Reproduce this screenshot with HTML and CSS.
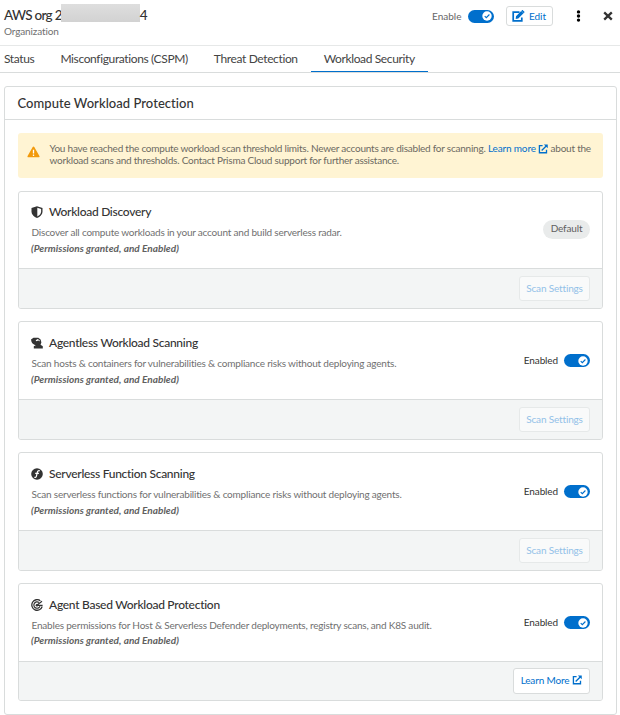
FILE: index.html
```html
<!DOCTYPE html>
<html lang="en">
<head>
<meta charset="utf-8">
<title>Workload Security</title>
<link rel="stylesheet" href="styles.css">
</head>
<body>
<svg class="defs" aria-hidden="true">
  <symbol id="external" viewBox="0 0 12 12"><path d="M5.500 2H1.700v8.500h8.500V6.800M4.400 7.800 10.500 1.700" fill="none" stroke="currentColor" stroke-width="1.600"/><path d="M7 .5h4.700v4.700z" fill="currentColor"/></symbol>
  <symbol id="check" viewBox="0 0 10 10"><circle cx="5" cy="5" r="4.700" fill="#fff"/><path d="m2.700 5.200 1.600 1.500L7.400 3.500" fill="none" stroke="#006fcc" stroke-width="1.100"/></symbol>
</svg>

<header class="header">
  <div class="heading">
    <h1 class="account">AWS org 2<span class="redacted"></span>4</h1>
    <div class="kind">Organization</div>
  </div>
  <div class="actions">
    <span class="enable-label">Enable</span>
    <span class="toggle"><svg class="knob"><use href="#check"/></svg></span>
    <button class="button edit"><svg class="edit-icon" viewBox="0 0 13 12"><path d="M7.500 2.200H1.200v8.600h8.600V7.400" fill="none" stroke="currentColor" stroke-width="1.700"/><path d="M4 6.200 9.200 1l2.300 2.300-5.200 5.200-2.600.4zM9.800.4c.4-.4.8-.4 1.200 0l1.200 1.200c.4.4.4.8 0 1.200l-.4.4L9.400.8z" fill="currentColor"/></svg>Edit</button>
    <svg class="more" viewBox="0 0 5 12"><circle cx="2.500" cy="1.900" r="1.700"/><circle cx="2.500" cy="6" r="1.700"/><circle cx="2.500" cy="10.100" r="1.700"/></svg>
    <svg class="close" viewBox="0 0 10 10"><path d="m1.200 1.400 7.600 7.200m0-7.200L1.200 8.600" fill="none" stroke="currentColor" stroke-width="2.300"/></svg>
  </div>
</header>

<nav class="tabs">
  <a class="tab">Status</a>
  <a class="tab">Misconfigurations (CSPM)</a>
  <a class="tab">Threat Detection</a>
  <a class="tab active">Workload Security</a>
</nav>

<main class="panel">
  <h2 class="panel-title">Compute Workload Protection</h2>
  <div class="panel-body">
    <div class="alert">
      <svg class="warning" viewBox="0 0 13 12"><path d="M5.700.9c.4-.7 1.200-.7 1.600 0l5.100 9c.4.7 0 1.400-.8 1.400H1.400c-.8 0-1.200-.7-.8-1.400z" fill="#f29a0c"/><path d="M6.500 3.800v3.600M6.500 8.500V10" stroke="#fff" stroke-width="1.300"/></svg>
      <p class="alert-text">You have reached the compute workload scan threshold limits. Newer accounts are disabled for scanning. <a class="link">Learn more <svg class="external"><use href="#external"/></svg></a> about the<br>workload scans and thresholds. Contact Prisma Cloud support for further assistance.</p>
    </div>

    <section class="card first">
      <div class="card-body">
        <div class="info">
          <h3 class="card-title"><svg class="icon" viewBox="0 0 12 12"><path d="M6 .2 11.500 2v3.500C11.500 8.500 9 11 6 11.900 3 11 .5 8.500.5 5.500V2z" fill="currentColor"/><path d="M6.300 1.700 10.100 3v2.600c0 2.100-1.600 4-3.800 4.800z" fill="#fff"/></svg>Workload Discovery</h3>
          <p class="description">Discover all compute workloads in your account and build serverless radar.</p>
          <p class="status">(Permissions granted, and Enabled)</p>
        </div>
        <span class="badge">Default</span>
      </div>
      <div class="card-footer"><button class="button" disabled>Scan Settings</button></div>
    </section>

    <section class="card tall">
      <div class="card-body">
        <div class="info">
          <h3 class="card-title"><svg class="icon" viewBox="0 0 12 12"><path d="M0 2.500 2.500.8h4.800l2.300 1.700.8 3-1.100 2.700H3.300C1.500 7.400.3 5 0 2.500z" fill="currentColor"/><path d="M4.700 3.300 6.700 2l1.900 1.300.2 1.300-1.300-1-2.300.7z" fill="#fff"/><path d="M2.800 11.500V9.300l2.700-1.700h3.700l2.600 1.700v2.200z" fill="currentColor"/><path d="m1 6.900 3.200 1.700" stroke="#fff" stroke-width=".9"/></svg>Agentless Workload Scanning</h3>
          <p class="description">Scan hosts &amp; containers for vulnerabilities &amp; compliance risks without deploying agents.</p>
          <p class="status">(Permissions granted, and Enabled)</p>
        </div>
        <span class="enabled">Enabled</span><span class="toggle"><svg class="knob"><use href="#check"/></svg></span>
      </div>
      <div class="card-footer"><button class="button" disabled>Scan Settings</button></div>
    </section>

    <section class="card tall">
      <div class="card-body">
        <div class="info">
          <h3 class="card-title"><svg class="icon" viewBox="0 0 12 12"><circle cx="6" cy="6" r="5.800" fill="currentColor"/><path d="M8.800 2.900C7.100 2.300 6.600 3.200 6.200 4.600L5.500 7.800C5.200 9.200 4.600 9.700 3.300 9.300M4.200 5.400h3.700" fill="none" stroke="#fff" stroke-width="1.200"/></svg>Serverless Function Scanning</h3>
          <p class="description">Scan serverless functions for vulnerabilities &amp; compliance risks without deploying agents.</p>
          <p class="status">(Permissions granted, and Enabled)</p>
        </div>
        <span class="enabled">Enabled</span><span class="toggle"><svg class="knob"><use href="#check"/></svg></span>
      </div>
      <div class="card-footer"><button class="button" disabled>Scan Settings</button></div>
    </section>

    <section class="card last">
      <div class="card-body">
        <div class="info">
          <h3 class="card-title"><svg class="icon" viewBox="0 0 12 12"><g fill="none" stroke="currentColor"><path d="M9.300 1.700A5.300 5.300 0 1 0 11.200 7.500" stroke-width="1.300"/><path d="M8 3.500A3.200 3.200 0 1 0 9 7.300" stroke-width="1.200"/><path d="M5.800 6.200 11 2.300M6 6.300h5.600" stroke-width="1.200"/></g><circle cx="6" cy="6.200" r="1.300" fill="currentColor"/></svg>Agent Based Workload Protection</h3>
          <p class="description">Enables permissions for Host &amp; Serverless Defender deployments, registry scans, and K8S audit.</p>
          <p class="status">(Permissions granted, and Enabled)</p>
        </div>
        <span class="enabled">Enabled</span><span class="toggle"><svg class="knob"><use href="#check"/></svg></span>
      </div>
      <div class="card-footer"><button class="button learn">Learn More <svg class="external"><use href="#external"/></svg></button></div>
    </section>
  </div>
</main>
</body>
</html>
```
FILE: styles.css
```css
* { box-sizing: border-box; }
body {
  margin: 0;
  height: 715px;
  overflow: hidden;
  background: #fff;
  color: #333;
  font: 10px/12px Lato, "Liberation Sans", sans-serif;
}
h1, h2, h3, p { margin: 0; }
svg { display: block; flex: none; }
.defs { display: none; }

.header {
  display: flex;
  justify-content: space-between;
  height: 46px;
  padding: 4px 7.500px 0 4px;
  border-bottom: 1px solid #e6e8e8;
}
.account {
  display: flex;
  height: 21px;
  font-size: 13.500px;
  font-weight: 500;
  line-height: 22px;
  letter-spacing: -.7px;
}
.redacted {
  width: 79px;
  height: 18px;
  margin-left: -1px;
  background: linear-gradient(#dedede, #d2d2d2);
}
.kind { color: #707070; letter-spacing: -.12px; }
.actions { display: flex; align-items: center; height: 24px; }
.enable-label { margin: -1px 6px 0 0; color: #666; }
.toggle {
  display: flex;
  justify-content: flex-end;
  align-items: center;
  width: 26px;
  height: 13px;
  padding-right: 2px;
  border-radius: 7px;
  background: #006fcc;
}
.knob { width: 10px; height: 10px; }
.button {
  display: flex;
  align-items: center;
  justify-content: center;
  width: 71px;
  height: 25px;
  padding: 0 0 2px;
  border: 1px solid #d9dcdc;
  border-radius: 3px;
  background: #fff;
  color: #006fcc;
  font: inherit;
  letter-spacing: -.16px;
}
.button:disabled { border-color: #e6e9e9; background: #f9fafa; color: #93c1e8; }
.edit { width: 47px; height: 20px; margin-left: 12px; padding-bottom: 1px; gap: 4px; letter-spacing: 0; }
.edit-icon { width: 13px; height: 12px; }
.more { width: 5px; height: 12px; margin-left: 23px; }
.close { width: 10px; height: 10px; margin-left: 22px; }

.tabs { display: flex; height: 27px; border-bottom: 1px solid #d9dcdc; }
.tab {
  height: 26px;
  padding: 0 13px;
  color: #444;
  font-size: 12px;
  line-height: 26px;
  letter-spacing: -.37px;
}
.tab:first-child { padding-left: 4px; }
.tab.active { border-bottom: 1px solid #006fcc; }

.panel {
  height: 629px;
  margin: 13px 3px 0 4px;
  border: 1px solid #d9dcdc;
  border-radius: 3px;
}
.panel-title {
  height: 33px;
  padding-left: 12.500px;
  border-bottom: 1px solid #d9dcdc;
  font-size: 13px;
  font-weight: 500;
  line-height: 32px;
  letter-spacing: .05px;
}
.panel-body { padding: 13px; }
.alert {
  display: flex;
  height: 45px;
  margin-bottom: 13px;
  padding: 9px 9px;
  border-radius: 3px;
  background: #fff4d3;
}
.warning { width: 13px; height: 12px; margin: 4px 9.500px 0 0; }
.alert-text { color: #6c6a62; letter-spacing: -.23px; white-space: nowrap; }
.link { color: #006fcc; letter-spacing: -.15px; }
.external { display: inline-block; width: 10px; height: 10px; vertical-align: -2px; }

.card {
  display: flex;
  flex-direction: column;
  height: 118px;
  margin-bottom: 12px;
  border: 1px solid #d9dcdc;
  border-radius: 3px;
  overflow: hidden;
}
.tall { height: 119px; }
.last { margin-bottom: 0; }
.card-body { display: flex; align-items: center; flex: 1; padding: 0 12px; }
.info { flex: 1; align-self: flex-start; padding-top: 12px; }
.first .info { padding-top: 11px; }
.card-title {
  display: flex;
  align-items: center;
  gap: 6px;
  height: 17px;
  font-size: 12px;
  font-weight: 500;
  line-height: 17px;
  letter-spacing: -.28px;
}
.icon { width: 12px; height: 12px; margin-top: 1px; }
.description, .status { height: 16px; line-height: 16px; white-space: nowrap; }
.description { margin-top: 4px; padding-left: .5px; color: #707070; letter-spacing: -.2px; }
.status { color: #606060; font-style: italic; font-weight: 700; letter-spacing: .04px; }
.last .status { margin-top: -1px; }
.badge {
  width: 47px;
  height: 19px;
  margin-top: -1px;
  border-radius: 10px;
  background: #e9ebeb;
  color: #606060;
  line-height: 17px;
  letter-spacing: -.15px;
  text-align: center;
}
.enabled { margin: -2px 6px 0 0; letter-spacing: -.12px; }
.card-footer {
  display: flex;
  align-items: center;
  justify-content: flex-end;
  height: 40px;
  padding-right: 12px;
  border-top: 1px solid #d9dcdc;
  background: #f3f5f5;
}
.last .card-footer { height: 39px; }
.learn { width: 77px; height: 26px; gap: 3px; }
```
